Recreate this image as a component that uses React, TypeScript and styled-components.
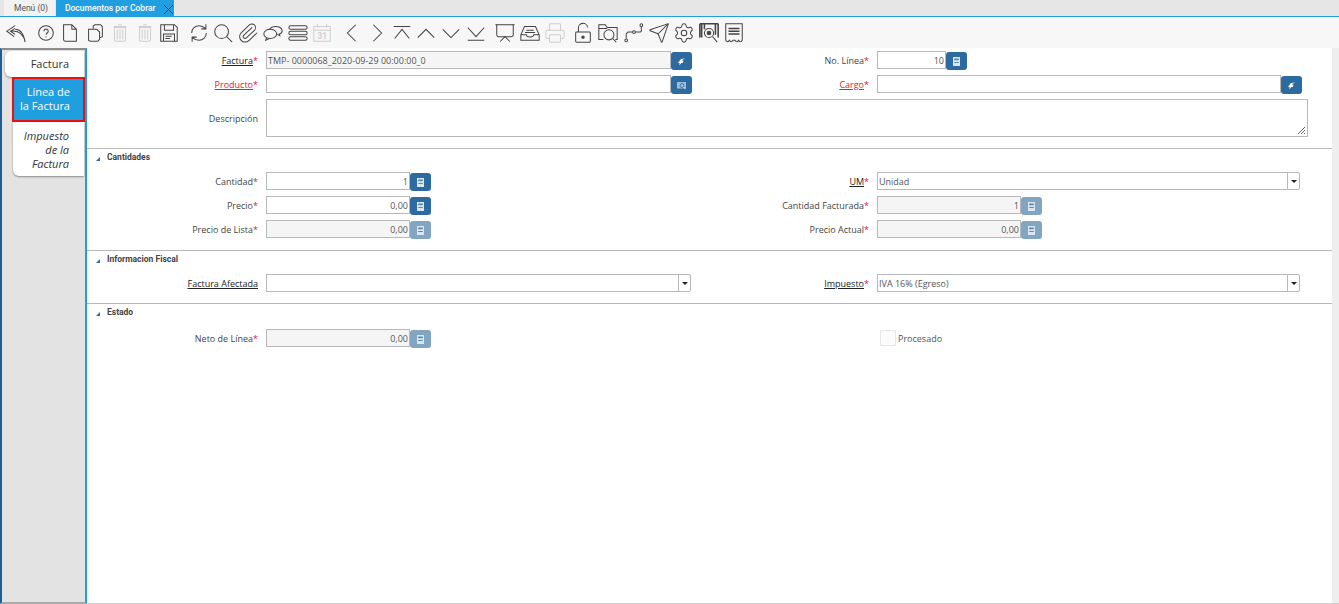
import React from "react";
import styled, { createGlobalStyle } from "styled-components";
import { Paperclip, Presentation, Printer, Settings, Send } from "lucide-react";

const Global = createGlobalStyle`
  html, body { margin: 0; padding: 0; height: 604px; overflow: hidden; background: #fff; }
  #root { height: 604px; }
  * { box-sizing: border-box; }
  body { font-family: "Open Sans", "Noto Sans", sans-serif; }
`;

const Page = styled.div`
  width: 1339px; height: 604px; display: flex; flex-direction: column; overflow: hidden; background: #fff;
`;
const TabBar = styled.div`
  height: 17px; flex: none; display: flex; padding-left: 4px; gap: 1px; background: #e6e6e6; border-bottom: 1px solid #1f9ee0;
`;
const TopTab = styled.div<{ $active?: boolean }>`
  height: 16px; display: flex; align-items: center; font-family: Roboto, sans-serif; font-size: 8.5px;
  padding-left: ${p => (p.$active ? 9 : 10)}px;
  width: ${p => (p.$active ? 118 : 51)}px;
  background: ${p => (p.$active ? "#1f9ee0" : "#f2f2f2")};
  color: ${p => (p.$active ? "#fff" : "#555")};
  font-weight: ${p => (p.$active ? 500 : 400)};
  position: relative;
`;
const TabClose = styled.svg`
  position: absolute; right: 0; top: 3px; width: 12px; height: 12px; fill: none; stroke: #17456b; stroke-width: 1;
`;
const Toolbar = styled.div`
  height: 31px; flex: none; display: flex; align-items: center; padding-left: 4px; background: #f7f7f7;
`;
const Tool = styled.div<{ $gap?: number; $off?: boolean }>`
  width: 24px; height: 24px; flex: none; margin-left: ${p => p.$gap ?? 1}px; opacity: ${p => (p.$off ? 0.22 : 1)};
  display: flex; align-items: center; justify-content: center; color: #444;
  svg { display: block; width: 22px; height: 22px; fill: none; stroke: currentColor; stroke-width: 1.1; }
`;
const Body = styled.div`
  flex: 1; display: flex; min-height: 0;
`;
const Side = styled.div`
  width: 87px; flex: none; background: #e3e3e3; border-left: 2px solid #1c5f94; border-right: 2px solid #1f9ee0;
  border-top: 2px solid #8c8c8c; border-bottom: 2px solid #aaa; padding: 1px 0 0 3px;
  display: flex; flex-direction: column; align-items: flex-end;
`;
const SideTab = styled.div<{ $w: number; $h: number; $sel?: boolean; $italic?: boolean; $round: string }>`
  width: ${p => p.$w}px; height: ${p => p.$h}px; flex: none; text-align: right;
  font-size: 11px; line-height: 14px; padding: ${p => (p.$sel ? "6px 13px 0 4px" : p.$italic ? "7px 15px 0 8px" : "6px 15px 0 8px")};
  background: ${p => (p.$sel ? "#1f9ee0" : "#fff")};
  color: ${p => (p.$sel ? "#fff" : "#333")};
  font-style: ${p => (p.$italic ? "italic" : "normal")};
  border: ${p => (p.$sel ? "2px solid #ee0f0f" : "none")};
  border-radius: ${p => p.$round};
  box-shadow: ${p => (p.$sel ? "none" : "0 1px 2px rgba(0,0,0,.4)")};
  margin-right: ${p => (p.$sel ? 0 : 1)}px;
`;
const Main = styled.div`
  flex: 1; display: flex; min-width: 0; border-bottom: 1px solid #cfcfcf;
`;
const Content = styled.div`
  width: 1245px; flex: none; padding-top: 3px;
`;
const Gutter = styled.div`
  flex: 1; background: #eeeeee;
`;
const Section = styled.section<{ $pb: number; $bordered?: boolean }>`
  padding-bottom: ${p => p.$pb}px;
  border-bottom: ${p => (p.$bordered ? "1px solid #b8b8b8" : "none")};
  display: flex; flex-direction: column; gap: 6px;
`;
const SectionHead = styled.div<{ $h: number }>`
  height: ${p => p.$h}px; margin-bottom: -6px; display: flex; align-items: flex-start; padding: 2px 0 0 9px;
  font-family: Roboto, sans-serif; font-size: 8.5px; font-weight: 700; color: #444; line-height: 12px;
`;
const Triangle = styled.span`
  width: 0; height: 0; margin: 6px 7px 0 0; border-style: solid; border-width: 0 0 4px 4px;
  border-color: transparent transparent #2d6a9f transparent;
`;
const Row = styled.div`
  display: grid; grid-template-columns: 179px 426px 185px 1fr; height: 18px;
`;
const TallRow = styled(Row)`
  height: 38px;
`;
const Label = styled.div`
  display: flex; align-items: center; justify-content: flex-end; padding-right: 8px; height: 18px;
  font-size: 9px; color: #444; white-space: nowrap;
`;
const TallLabel = styled(Label)`
  height: 38px;
`;
const Linked = styled.span<{ $red?: boolean }>`
  text-decoration: underline; color: ${p => (p.$red ? "#e0202c" : "#222")};
`;
const Star = styled.span`
  color: #e0202c;
`;
const Field = styled.div`
  display: flex; align-items: flex-start; height: 18px;
`;
const Input = styled.div<{ $w: number; $ro?: boolean; $num?: boolean }>`
  width: ${p => p.$w}px; height: 18px; flex: none; border: 1px solid #b8b8b8; display: flex; align-items: center;
  background: ${p => (p.$ro ? "#f5f5f5" : "#fff")}; font-size: 9px; color: #555; white-space: nowrap;
  justify-content: ${p => (p.$num ? "flex-end" : "flex-start")};
  padding: ${p => (p.$num ? "0 1px 0 0" : "0 0 0 1px")};
`;
const TextArea = styled.div`
  grid-column: 2 / 5; width: 1042px; height: 38px; border: 1px solid #b8b8b8; background: #fff; position: relative;
`;
const Grip = styled.svg`
  position: absolute; right: 1px; bottom: 1px; width: 9px; height: 9px; stroke: #666; stroke-width: 1; fill: none;
`;
const IconBtn = styled.div<{ $off?: boolean }>`
  width: 21px; height: 18px; margin-top: 1px; flex: none; border-radius: 3px; display: flex; align-items: center; justify-content: center;
  background: ${p => (p.$off ? "#82a5c2" : "#2d6a9f")};
  svg { width: 9px; height: 9px; display: block; }
`;
const Arrow = styled.div`
  width: 13px; height: 18px; flex: none; border: 1px solid #b8b8b8; border-left-width: 1px; margin-left: -1px; border-radius: 0 2px 2px 0;
  display: flex; align-items: center; justify-content: center; background: #fff;
  &::after { content: ""; width: 0; height: 0; border-style: solid; border-width: 3px 3px 0 3px; border-color: #222 transparent transparent transparent; }
`;
const CheckField = styled.div`
  display: flex; align-items: center; height: 18px; padding-left: 3px; font-size: 9px; color: #555;
`;
const Box = styled.span`
  width: 16px; height: 16px; margin-right: 2px; border: 1px solid #e6e6e6; border-radius: 1px; background: #fbfbfb;
`;

const Calc = () => (
  <svg viewBox="0 0 9 9" fill="none">
    <path fill="#dbe6ef" d="M1 0h7v9H1z" />
    <path fill="#2d6a9f" d="M2.2 1.4h4.6v1.8H2.2zM2.2 5h4.6v.9H2.2z" opacity=".75" />
  </svg>
);
const Zoomish = () => (
  <svg viewBox="0 0 9 9" fill="none">
    <path fill="#fff" d="M8.6 1.2 4.4 2.1C3 2.5 2.6 3.6 2.5 4.6L.6 5.6l2 .5L2.4 8.2 4.4 6h1.8l-.7-1.3 1.7-.6-2.1-.5C5 2.8 6.6 2 8.6 1.2z" />
  </svg>
);
const ProductIcon = () => (
  <svg viewBox="0 0 9 9" fill="none">
    <path fill="#9fbdd6" d="M0 1h9v6.5H0z" />
    <circle cx="5" cy="4.5" r="2" stroke="#2d6a9f" strokeWidth=".8" />
    <path stroke="#e6eef5" strokeWidth=".8" d="M6.5 6 8.5 8.2" />
  </svg>
);

type ToolDef = { gap?: number; off?: boolean; icon: React.ReactNode };
const tools: ToolDef[] = [
  { gap: 0, icon: <svg viewBox="0 0 24 24"><path d="M11 4 2 10l8 6M11 7l-5 3 5 3.500M6 10c8-1 14 2 16 12M11 8c5 0 9 3 11 14" /></svg> },
  { gap: 6, icon: <svg viewBox="0 0 24 24"><circle cx="12" cy="12" r="8" /><path d="M9.800 10c0-3 4.600-3 4.600 0 0 2-2.300 2-2.300 4M12.100 15.500v1.200" /></svg> },
  { gap: 0, icon: <svg viewBox="0 0 24 24"><path d="M5 3h9l5 5v13H7a2 2 0 0 1-2-2zM14 3v5h5" /></svg> },
  { icon: <svg viewBox="0 0 24 24"><path d="M10 7V4.500L12 3h6l2 2v11l-2 1h-1M5 8h9l3 3v8l-2 2H7l-2-1z" /></svg> },
  { off: true, icon: <svg viewBox="0 0 24 24"><path d="M6 6h12v14l-2 1H8l-2-1zM5 5h14M10 3h4M9 8v11M12 8v11M15 8v11" /></svg> },
  { off: true, icon: <svg viewBox="0 0 24 24"><path d="M6 6h12v14l-2 1H8l-2-1zM5 5h14M10 3h4M9 8v11M12 8v11M15 8v11" /></svg> },
  { gap: 0, icon: <svg viewBox="0 0 24 24" strokeWidth="1.6"><path d="M3 3h15l3 3v15H3zM7 3v6h10V3M6 21v-8h12v8M8 15.500h7M8 18h5" /></svg> },
  { gap: 6, icon: <svg viewBox="0 0 24 24"><path d="M4 12C4 7 8 4 12 4c3 0 5 1 7 3M20 12c0 5-4 8-8 8-3 0-5-1-7-3M19.500 2.500V7.500h-5M4.500 21.500V16.500h5" /></svg> },
  { gap: 0, icon: <svg viewBox="0 0 24 24" strokeWidth="1.3"><circle cx="10.500" cy="10.500" r="7.500" /><path d="m16 16 6 6" /></svg> },
  { icon: <Paperclip strokeWidth={1.1} style={{ transform: "rotate(2deg)" }} /> },
  { icon: <svg viewBox="0 0 24 24"><path d="M8 8.500C9 6 12 5 15 5c4 0 7 2 7 4.500 0 1.500-1 3-3 3.500l.5 2-3-1.800" /><ellipse cx="9" cy="13" rx="7" ry="5" /><path d="m5 17-1 3 4-2" /></svg> },
  { icon: <svg viewBox="0 0 24 24" strokeWidth="1.4" fill="#aaa"><rect x="2" y="4" width="20" height="4" rx="2" /><rect x="2" y="10" width="20" height="4" rx="2" /><rect x="2" y="16" width="20" height="4" rx="2" /></svg> },
  { off: true, gap: 0, icon: <svg viewBox="0 0 24 24"><path d="M3 5h18v16H3zM3 9h18M7 2v4M17 2v4" /><text x="7" y="19" fontSize="9" fontFamily="Roboto" fontWeight="700" stroke="none" fill="currentColor">31</text></svg> },
  { gap: 6, icon: <svg viewBox="0 0 24 24"><path d="m16 3-9 9 9 9" /></svg> },
  { icon: <svg viewBox="0 0 24 24"><path d="m8 3 9 9-9 9" /></svg> },
  { icon: <svg viewBox="0 0 24 24"><path d="M3 5h18M4 18l8-10 8 10" /></svg> },
  { gap: 0, icon: <svg viewBox="0 0 24 24"><path d="m3 17 9-9 9 9" /></svg> },
  { icon: <svg viewBox="0 0 24 24"><path d="m3 8 9 9 9-9" /></svg> },
  { icon: <svg viewBox="0 0 24 24"><path d="M3 6l9 10 9-10M3 20h18" /></svg> },
  { gap: 5, icon: <Presentation strokeWidth={1.3} /> },
  { icon: <svg viewBox="0 0 24 24" strokeWidth="1.3"><path d="M2 14 6 5h12l4 9v6H2zM2 14h6c0 3 8 3 8 0h6M8 9h8M6.500 11.500h11" /></svg> },
  { off: true, icon: <Printer strokeWidth={1.3} /> },
  { gap: 4, icon: <svg viewBox="0 0 24 24" strokeWidth="1.4"><rect x="4" y="11" width="16" height="11" rx="1" /><path d="M7 11V7a5 5 0 0 1 10-1" /><circle cx="12" cy="16.500" r="1.300" fill="currentColor" /></svg> },
  { icon: <svg viewBox="0 0 24 24" strokeWidth="1.2"><path d="M20 19h2V6H11L9 3H2v16h5M2 7h9" /><circle cx="13" cy="14" r="5.500" /><path d="m17 18 4 4" /></svg> },
  { gap: 2, icon: <svg viewBox="0 0 24 24"><circle cx="3.500" cy="20" r="1.500" /><path d="M3.500 18v-5l2-2h5" /><circle cx="12" cy="11" r="1.500" /><path d="M13.500 11H19l1-1V5" /><circle cx="20" cy="3.500" r="1.500" /></svg> },
  { icon: <Send strokeWidth={1.1} /> },
  { icon: <Settings strokeWidth={1.2} /> },
  { icon: <svg viewBox="0 0 24 24" strokeWidth="1.2"><path d="M2 2v15M4 2v15M7 2v6M19 2v12M22 2v15M2 2h20" strokeWidth="1.700" /><circle cx="12" cy="12" r="5" /><circle cx="12" cy="12" r="2" fill="currentColor" /><path d="m16 16 5 6" /></svg> },
  { icon: <svg viewBox="0 0 24 24" strokeWidth="1.4"><path d="M3 2h18v18c-1 2-3 2-4 0-1 2-3 2-4 0h-2c-1 2-3 2-4 0-1 2-3 2-4 0z" /><path d="M6 7h12M6 10h12M6 13h12" strokeWidth="1.700" /></svg> },
];

const Req = () => <Star>*</Star>;

export default function App() {
  return (
    <Page>
      <Global />
      <TabBar>
        <TopTab>Menú (0)</TopTab>
        <TopTab $active>
          Documentos por Cobrar
          <TabClose viewBox="0 0 12 12"><path d="M2 2l9 9M11 2l-9 9" /></TabClose>
        </TopTab>
      </TabBar>
      <Toolbar>
        {tools.map((t, i) => (
          <Tool key={i} $gap={t.gap} $off={t.off}>{t.icon}</Tool>
        ))}
      </Toolbar>
      <Body>
        <Side>
          <SideTab $w={79} $h={26} $round="6px 0 0 6px">Factura</SideTab>
          <SideTab $w={73} $h={45} $sel $round="0">Línea de la Factura</SideTab>
          <SideTab $w={71} $h={54} $italic $round="0 0 0 6px">Impuesto de la Factura</SideTab>
        </Side>
        <Main>
          <Content>
            <Section $pb={11} $bordered>
              <Row>
                <Label><Linked>Factura</Linked><Req /></Label>
                <Field>
                  <Input $w={405} $ro>TMP- 0000068_2020-09-29 00:00:00_0</Input>
                  <IconBtn><Zoomish /></IconBtn>
                </Field>
                <Label>No. Línea<Req /></Label>
                <Field>
                  <Input $w={69} $num>10</Input>
                  <IconBtn><Calc /></IconBtn>
                </Field>
              </Row>
              <Row>
                <Label><Linked $red>Producto</Linked><Req /></Label>
                <Field>
                  <Input $w={405} />
                  <IconBtn><ProductIcon /></IconBtn>
                </Field>
                <Label><Linked $red>Cargo</Linked><Req /></Label>
                <Field>
                  <Input $w={404} />
                  <IconBtn><Zoomish /></IconBtn>
                </Field>
              </Row>
              <TallRow>
                <TallLabel>Descripción</TallLabel>
                <TextArea>
                  <Grip viewBox="0 0 9 9"><path d="M8 1 1 8M8 4 4 8M8 7 7 8" /></Grip>
                </TextArea>
              </TallRow>
            </Section>
            <Section $pb={12} $bordered>
              <SectionHead $h={23}><Triangle />Cantidades</SectionHead>
              <Row>
                <Label>Cantidad<Req /></Label>
                <Field>
                  <Input $w={144} $num>1</Input>
                  <IconBtn><Calc /></IconBtn>
                </Field>
                <Label><Linked>UM</Linked><Req /></Label>
                <Field>
                  <Input $w={411}>Unidad</Input>
                  <Arrow />
                </Field>
              </Row>
              <Row>
                <Label>Precio<Req /></Label>
                <Field>
                  <Input $w={144} $num>0,00</Input>
                  <IconBtn><Calc /></IconBtn>
                </Field>
                <Label>Cantidad Facturada<Req /></Label>
                <Field>
                  <Input $w={144} $ro $num>1</Input>
                  <IconBtn $off><Calc /></IconBtn>
                </Field>
              </Row>
              <Row>
                <Label>Precio de Lista<Req /></Label>
                <Field>
                  <Input $w={144} $ro $num>0,00</Input>
                  <IconBtn $off><Calc /></IconBtn>
                </Field>
                <Label>Precio Actual<Req /></Label>
                <Field>
                  <Input $w={144} $ro $num>0,00</Input>
                  <IconBtn $off><Calc /></IconBtn>
                </Field>
              </Row>
            </Section>
            <Section $pb={11} $bordered>
              <SectionHead $h={23}><Triangle />Informacion Fiscal</SectionHead>
              <Row>
                <Label><Linked>Factura Afectada</Linked></Label>
                <Field>
                  <Input $w={413} />
                  <Arrow />
                </Field>
                <Label><Linked>Impuesto</Linked><Req /></Label>
                <Field>
                  <Input $w={411}>IVA 16% (Egreso)</Input>
                  <Arrow />
                </Field>
              </Row>
            </Section>
            <Section $pb={0}>
              <SectionHead $h={25}><Triangle />Estado</SectionHead>
              <Row>
                <Label>Neto de Línea<Req /></Label>
                <Field>
                  <Input $w={144} $ro $num>0,00</Input>
                  <IconBtn $off><Calc /></IconBtn>
                </Field>
                <div />
                <CheckField><Box />Procesado</CheckField>
              </Row>
            </Section>
          </Content>
          <Gutter />
        </Main>
      </Body>
    </Page>
  );
}
